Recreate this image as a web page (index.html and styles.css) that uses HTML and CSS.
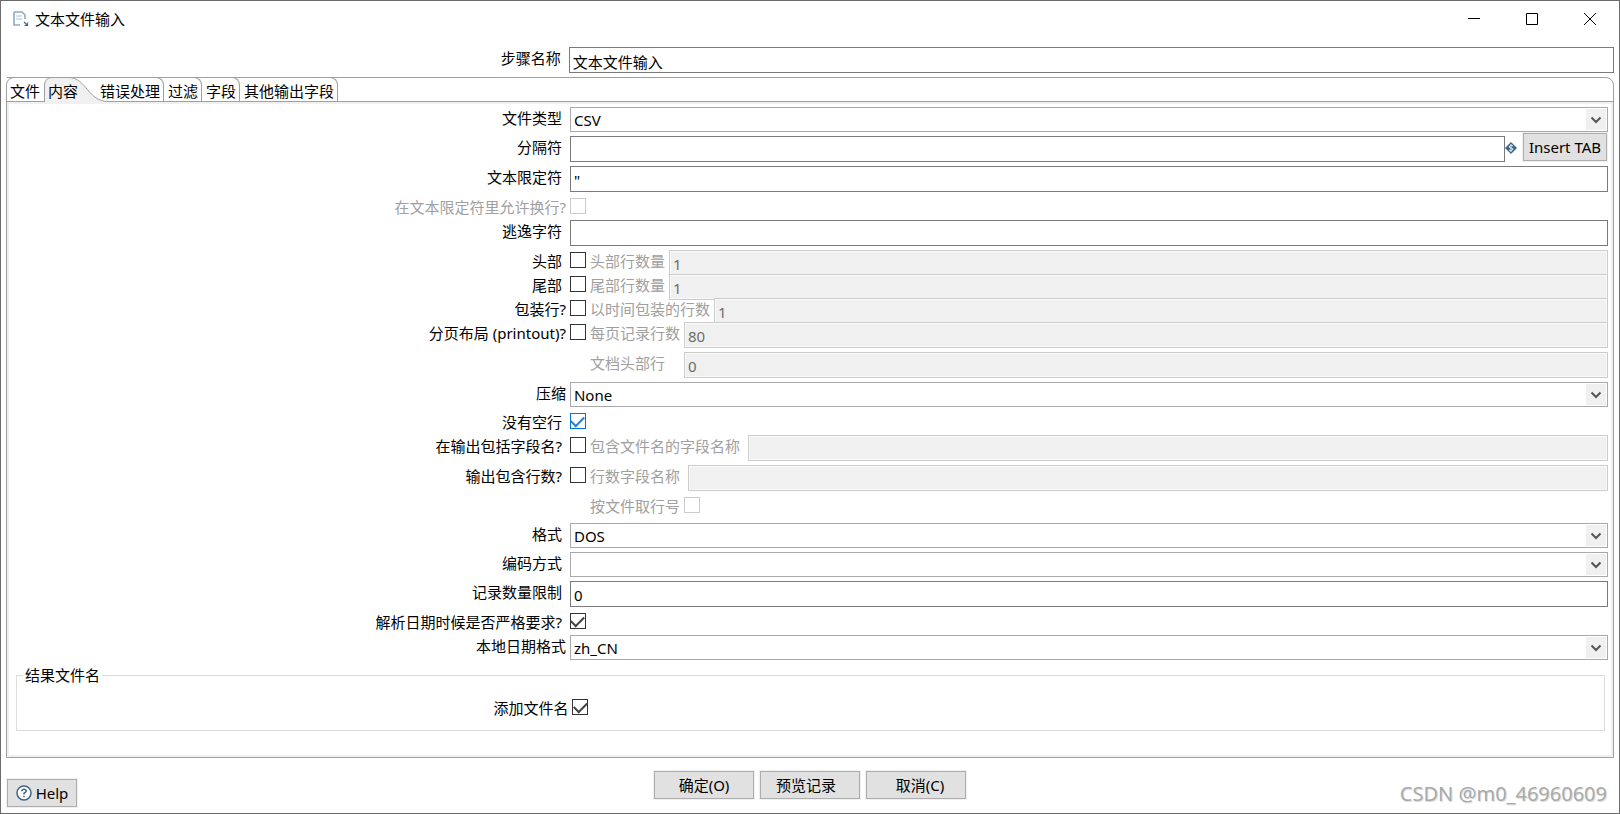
FILE: index.html
```html
<!DOCTYPE html>
<html lang="zh-CN">
<head>
<meta charset="utf-8">
<title>文本文件输入</title>
<link rel="stylesheet" href="styles.css">
</head>
<body>
<svg class="defs" aria-hidden="true">
  <symbol id="chevron" viewBox="0 0 20 21"><path d="M5.5 8.500 L10 13 L14.500 8.500" fill="none" stroke="#555" stroke-width="2"/></symbol>
</svg>
<main class="window">
  <header class="titlebar">
    <svg class="app-icon" viewBox="0 0 16 16" aria-hidden="true">
      <path d="M1 1h8l3 3v4M7 14H1V1" fill="none" stroke="#8fabc0" stroke-width="1.600"/>
      <path d="M3 5h6M3 8h6" stroke="#a9bfce" stroke-width="1"/>
      <path d="M11 11l3 3M14.500 11.500v3h-3" fill="none" stroke="#3d6785" stroke-width="1.200"/>
    </svg>
    <h1 class="title">文本文件输入</h1>
    <div class="window-buttons">
      <button class="window-button" aria-label="最小化"><svg viewBox="0 0 12 12"><path d="M0 5.500h12" /></svg></button>
      <button class="window-button" aria-label="最大化"><svg viewBox="0 0 12 12"><path d="M.5.500h11v11H.500z"/></svg></button>
      <button class="window-button" aria-label="关闭"><svg viewBox="0 0 12 12"><path d="M0 0l12 12M12 0L0 12"/></svg></button>
    </div>
  </header>

  <div class="row step-row">
    <label class="label" for="step">步骤名称</label>
    <input class="text" id="step" type="text" value="文本文件输入">
  </div>

  <section class="folder">
    <div class="tabs" role="tablist">
      <button class="tab tab-first" role="tab">文件</button>
      <button class="tab tab-selected" role="tab" aria-selected="true">
        <svg class="tab-shape" viewBox="0 0 64 25" aria-hidden="true"><path d="M.500 25V8Q1 .500 8 .500H25C42 .500 44 24.500 64 24.500V25z" fill="#f0f0f0"/><path d="M.500 25V8Q1 .500 8 .500H25C42 .500 44 24.500 64 24.500" fill="none" stroke="#a0a0a0"/></svg>
        <span class="tab-text">内容</span>
      </button>
      <button class="tab" role="tab">错误处理</button>
      <button class="tab" role="tab">过滤</button>
      <button class="tab" role="tab">字段</button>
      <button class="tab" role="tab">其他输出字段</button>
    </div>

    <form class="panel" id="content">
      <div class="row">
        <label class="label" for="type">文件类型</label>
        <span class="combo"><select id="type"><option>CSV</option></select><svg class="arrow"><use href="#chevron"/></svg></span>
      </div>
      <div class="row">
        <label class="label" for="sep">分隔符</label>
        <input class="text" id="sep" type="text">
        <svg class="variable" viewBox="0 0 12 12" aria-hidden="true"><path d="M6 0l6 6-6 6-6-6z" fill="#3d6785"/><path d="M8 4Q6 2.500 4.500 4T6 6t1.500 2T4 8M6 2v8" fill="none" stroke="#e4ebf0"/></svg>
        <button class="button insert" type="button">Insert TAB</button>
      </div>
      <div class="row">
        <label class="label" for="enclosure">文本限定符</label>
        <input class="text" id="enclosure" type="text" value="&quot;">
      </div>
      <div class="row row-check">
        <label class="label label-near muted" for="breaks">在文本限定符里允许换行?</label>
        <input class="check" id="breaks" type="checkbox" disabled>
      </div>
      <div class="row">
        <label class="label" for="escape">逃逸字符</label>
        <input class="text" id="escape" type="text">
      </div>
      <div class="row">
        <label class="label" for="header">头部</label>
        <input class="check" id="header" type="checkbox">
        <label class="sub" for="header-n">头部行数量</label>
        <input class="text" id="header-n" type="text" value="1" disabled>
      </div>
      <div class="row row-tight">
        <label class="label" for="footer">尾部</label>
        <input class="check" id="footer" type="checkbox">
        <label class="sub" for="footer-n">尾部行数量</label>
        <input class="text" id="footer-n" type="text" value="1" disabled>
      </div>
      <div class="row row-tight">
        <label class="label label-near" for="wrap">包装行?</label>
        <input class="check" id="wrap" type="checkbox">
        <label class="sub" for="wrap-n">以时间包装的行数</label>
        <input class="text" id="wrap-n" type="text" value="1" disabled>
      </div>
      <div class="row row-tight">
        <label class="label label-near" for="paged">分页布局 (printout)?</label>
        <input class="check" id="paged" type="checkbox">
        <label class="sub" for="paged-n">每页记录行数</label>
        <input class="text" id="paged-n" type="text" value="80" disabled>
      </div>
      <div class="row row-indent">
        <label class="sub sub-wide" for="doc-n">文档头部行</label>
        <input class="text" id="doc-n" type="text" value="0" disabled>
      </div>
      <div class="row">
        <label class="label label-near" for="zip">压缩</label>
        <span class="combo"><select id="zip"><option>None</option></select><svg class="arrow"><use href="#chevron"/></svg></span>
      </div>
      <div class="row row-check">
        <label class="label" for="noempty">没有空行</label>
        <input class="check check-hot" id="noempty" type="checkbox" checked>
      </div>
      <div class="row">
        <label class="label" for="incname">在输出包括字段名?</label>
        <input class="check" id="incname" type="checkbox">
        <label class="sub sub-far" for="incname-f">包含文件名的字段名称</label>
        <input class="text" id="incname-f" type="text" disabled>
      </div>
      <div class="row">
        <label class="label" for="incrow">输出包含行数?</label>
        <input class="check" id="incrow" type="checkbox">
        <label class="sub sub-far" for="incrow-f">行数字段名称</label>
        <input class="text" id="incrow-f" type="text" disabled>
      </div>
      <div class="row row-check row-indent row-loose">
        <label class="sub" for="byfile">按文件取行号</label>
        <input class="check" id="byfile" type="checkbox" disabled>
      </div>
      <div class="row">
        <label class="label" for="format">格式</label>
        <span class="combo"><select id="format"><option>DOS</option></select><svg class="arrow"><use href="#chevron"/></svg></span>
      </div>
      <div class="row">
        <label class="label" for="encoding">编码方式</label>
        <span class="combo"><select id="encoding"><option></option></select><svg class="arrow"><use href="#chevron"/></svg></span>
      </div>
      <div class="row">
        <label class="label" for="limit">记录数量限制</label>
        <input class="text" id="limit" type="text" value="0">
      </div>
      <div class="row row-check">
        <label class="label" for="strict">解析日期时候是否严格要求?</label>
        <input class="check" id="strict" type="checkbox" checked>
      </div>
      <div class="row">
        <label class="label label-near" for="locale">本地日期格式</label>
        <span class="combo"><select id="locale"><option>zh_CN</option></select><svg class="arrow"><use href="#chevron"/></svg></span>
      </div>
      <fieldset class="group">
        <legend>结果文件名</legend>
        <div class="row row-check">
          <label class="label label-near" for="addname">添加文件名</label>
          <input class="check" id="addname" type="checkbox" checked>
        </div>
      </fieldset>
    </form>
  </section>

  <footer class="footer">
    <button class="button help"><svg viewBox="0 0 16 16" aria-hidden="true"><circle cx="8" cy="8" r="7" fill="#fff" stroke="#3d6785" stroke-width="1.500"/><path d="M5.800 6.200Q6 4.200 8 4.200t2.200 1.900Q10 7.300 8 8.200V9.500M8 10.700v1.600" fill="none" stroke="#3d6785" stroke-width="1.500"/></svg>Help</button>
    <div class="actions">
      <button class="button action">确定(O)</button>
      <button class="button action action-left">预览记录</button>
      <button class="button action action-right">取消(C)</button>
    </div>
  </footer>
  <div class="watermark">CSDN @m0_46960609</div>
</main>
</body>
</html>
```
FILE: styles.css
```css
* { box-sizing: border-box; }

body {
  margin: 0;
  background: #fff;
  color: #000;
  font: 15px/22px "Noto Sans", "Noto Sans CJK SC", sans-serif;
}

button, input, select { font: inherit; color: inherit; margin: 0; }

.defs { position: absolute; width: 0; height: 0; }

.window {
  position: relative;
  display: flex;
  flex-direction: column;
  min-height: 100vh;
  border: 1px solid #6b6b6b;
}

.titlebar { display: flex; align-items: center; height: 36px; padding-left: 12px; }
.app-icon { width: 16px; height: 16px; }
.title { flex: 1; margin: 0 0 0 6px; font-size: 15px; font-weight: 400; }
.window-buttons { display: flex; }
.window-button {
  display: grid;
  place-items: center;
  width: 58px;
  height: 36px;
  padding: 0;
  border: 0;
  background: none;
}
.window-button svg { width: 12px; height: 12px; fill: none; stroke: #000; }

.row { display: flex; align-items: flex-start; min-height: 25px; }
.label { flex: none; width: 35%; padding-right: 8px; text-align: right; white-space: nowrap; }
.label-near { padding-right: 4px; }
.muted { color: #a0a0a0; }
.sub { flex: none; margin: 0 4px; color: #a0a0a0; white-space: nowrap; }
.sub-far { margin-right: 8px; }
.sub-wide { width: 90px; }

.step-row { margin: 10px 5px 4px; }

.text {
  flex: 1;
  min-width: 0;
  height: 26px;
  padding: 2px 3px 0;
  border: 1px solid #7a7a7a;
  border-radius: 0;
  background: #fff;
}
.text:disabled {
  border-color: #ccc;
  background: #f0f0f0;
  box-shadow: inset 0 0 0 1px #fafafa;
  color: #6d6d6d;
}

.combo { position: relative; flex: 1; display: flex; }
.combo select {
  appearance: none;
  width: 100%;
  height: 25px;
  padding: 0 24px 0 3px;
  border: 1px solid #a9a9ad;
  border-radius: 0;
  background: #fff;
}
.arrow {
  position: absolute;
  top: 2px;
  right: 2px;
  width: 20px;
  height: 21px;
  background: #f0f0f0;
  pointer-events: none;
}

.check {
  appearance: none;
  flex: none;
  display: grid;
  place-items: center;
  width: 16px;
  height: 16px;
  margin-top: 2px;
  border: 1px solid #333;
  background: #fff;
}
.check:checked::before {
  content: "";
  width: 11px;
  height: 6px;
  margin-top: -3px;
  border: solid #444;
  border-width: 0 0 2px 2px;
  transform: rotate(-45deg);
}
.check:disabled { border-color: #ccc; }
.check-hot { border-color: #0078d7; }
.check-hot:checked::before { border-color: #2f7fd0; }

.folder {
  flex: 1;
  display: flex;
  flex-direction: column;
  margin: 0 5px;
  border: 1px solid #a0a0a0;
  border-radius: 8px 8px 0 0;
}
.tabs { display: flex; height: 24px; border-bottom: 1px solid #a0a0a0; }
.tab {
  position: relative;
  height: 24px;
  margin-top: -1px;
  padding: 3px 3px 0 4px;
  border: solid #a0a0a0;
  border-width: 1px 1px 0 0;
  border-radius: 0 8px 0 0;
  background: none;
  line-height: 20px;
  white-space: nowrap;
}
.tab-first { padding: 3px 4px 0 3px; border-width: 1px 0 0; border-radius: 0; }
.tab-selected { width: 52px; padding: 4px 0 0 4px; border: 0; text-align: left; }
.tab-shape { position: absolute; left: 0; top: 0; width: 64px; height: 25px; }
.tab-text { position: relative; }

.panel {
  flex: 1;
  display: flex;
  flex-direction: column;
  gap: 4px;
  padding: 3px 3px 8px 2px;
  border: 2px solid #f0f0f0;
}
.row-check { height: 20px; min-height: 20px; }
.row-loose { height: 24px; }
.row-tight { margin-top: -6px; }
.row-indent { padding-left: calc(35% + 16px); }

.group {
  min-width: 0;
  margin: 0 3px 0 5px;
  padding: 11px 0 13px;
  border: 1px solid #dcdcdc;
}
.group legend { margin-left: 6px; padding: 0 2px; }

.button {
  height: 28px;
  padding: 0;
  border: 1px solid #adadad;
  background: #e1e1e1;
  white-space: nowrap;
  outline: 1px solid #f0f0f0;
}
.variable { flex: none; width: 12px; height: 12px; margin: 6px 6px 0 0; }
.insert { width: 84px; margin: -3px 1px 0 0; }

.footer {
  display: grid;
  grid-template-columns: 1fr auto 1fr;
  padding: 13px 6px 6px;
}
.help {
  display: flex;
  align-items: center;
  justify-content: center;
  gap: 4px;
  width: 70px;
  margin-top: 8px;
}
.help svg { width: 16px; height: 16px; }
.actions { display: flex; gap: 6px; }
.action { width: 100px; }
.action-left { padding-right: 8px; }
.action-right { padding-left: 8px; }

.watermark {
  position: absolute;
  right: 12px;
  bottom: 6px;
  color: #aaa;
  font-size: 20px;
  line-height: 26px;
  text-shadow: 1px 1px 0 #ddd;
}
```
